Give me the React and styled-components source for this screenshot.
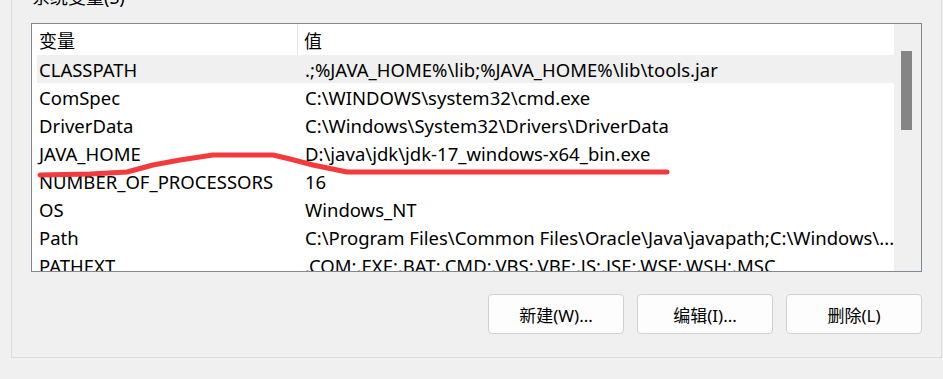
import React from 'react'
import styled, { createGlobalStyle } from 'styled-components'

const GlobalStyle = createGlobalStyle`
    * { box-sizing: border-box; }
    body {
        margin: 0;
        background: #f0f0f0;
        overflow: hidden;
        font-family: "Noto Sans", "Noto Sans CJK SC", sans-serif;
        color: #000;
    }
`

const Page = styled.div`
    position: relative;
    width: 943px;
    height: 379px;
    padding-left: 11px;
`

const Group = styled.div`
    display: flow-root;
    width: 931px;
    height: 358px;
    border: 1px solid #dcdcdc;
    border-top: none;
    padding: 0 19px;
`

const Title = styled.div`
    margin-top: -12px;
    height: 18px;
    font-size: 18px;
    line-height: 18px;
    margin-left: 1px;
`

const List = styled.div`
    margin-top: 17px;
    width: 891px;
    height: 249px;
    border: 1px solid #828790;
    display: flex;
`

const Content = styled.div`
    width: 862px;
    background: #fff;
    padding-left: 5px;
    overflow: hidden;
`

const Header = styled.div`
    display: flex;
    height: 31px;
    align-items: center;
    font-size: 18px;
`

const HeadCell = styled.div`
    width: ${p => p.w ? `${p.w}px` : 'auto'};
    flex: ${p => p.w ? 'none' : 1};
    height: 100%;
    display: flex;
    align-items: center;
    padding-left: ${p => p.pad}px;
    border-right: ${p => p.divider ? '1px solid #e5e5e5' : 'none'};
`

const Row = styled.div`
    display: grid;
    grid-template-columns: 266px 1fr;
    height: 28px;
    align-items: center;
    font-size: 18.5px;
    background: ${p => p.selected ? '#f0f0f0' : 'transparent'};
    white-space: nowrap;
`

const Cell = styled.div`
    padding-left: 2px;
    overflow: hidden;
`

const Scrollbar = styled.div`
    width: 27px;
    background: #f0f0f0;
    padding: 27px 0 0 7px;
`

const Thumb = styled.div`
    width: 11px;
    height: 79px;
    background: #858585;
`

const Buttons = styled.div`
    margin-top: 22px;
    width: 891px;
    display: flex;
    justify-content: flex-end;
    gap: 13px;
`

const Button = styled.button`
    width: 136px;
    height: 40px;
    background: #fdfdfd;
    border: 1px solid #d0d0d0;
    border-radius: 4px;
    font-family: inherit;
    font-size: 17px;
    color: #000;
    padding: 0;
`

const Scribble = styled.svg`
    position: absolute;
    left: 0;
    top: 0;
    pointer-events: none;
`

const vars = [
    ['CLASSPATH', '.;%JAVA_HOME%\\lib;%JAVA_HOME%\\lib\\tools.jar'],
    ['ComSpec', 'C:\\WINDOWS\\system32\\cmd.exe'],
    ['DriverData', 'C:\\Windows\\System32\\Drivers\\DriverData'],
    ['JAVA_HOME', 'D:\\java\\jdk\\jdk-17_windows-x64_bin.exe'],
    ['NUMBER_OF_PROCESSORS', '16'],
    ['OS', 'Windows_NT'],
    ['Path', 'C:\\Program Files\\Common Files\\Oracle\\Java\\javapath;C:\\Windows\\...'],
    ['PATHEXT', '.COM;.EXE;.BAT;.CMD;.VBS;.VBE;.JS;.JSE;.WSF;.WSH;.MSC'],
]

const App = () => (
    <Page>
        <GlobalStyle />
        <Group>
            <Title>系统变量(S)</Title>
            <List>
                <Content>
                    <Header>
                        <HeadCell w={261} pad={2} divider>变量</HeadCell>
                        <HeadCell pad={6}>值</HeadCell>
                    </Header>
                    {vars.map(([name, value], i) =>
                        <Row key={name} selected={i === 0}>
                            <Cell>{name}</Cell>
                            <Cell>{value}</Cell>
                        </Row>
                    )}
                </Content>
                <Scrollbar>
                    <Thumb />
                </Scrollbar>
            </List>
            <Buttons>
                <Button>新建(W)...</Button>
                <Button>编辑(I)...</Button>
                <Button>删除(L)</Button>
            </Buttons>
        </Group>
        <Scribble width="943" height="379">
            <path
                d="M40 175 L90 174 L127 172 L153 165 L180 160 L213 155 L273 155 L290 159 L313 165 L347 172 L667 172"
                fill="none"
                stroke="#f33a3d"
                strokeWidth="5"
                strokeLinecap="round"
                strokeLinejoin="round"
            />
        </Scribble>
    </Page>
)

export default App
